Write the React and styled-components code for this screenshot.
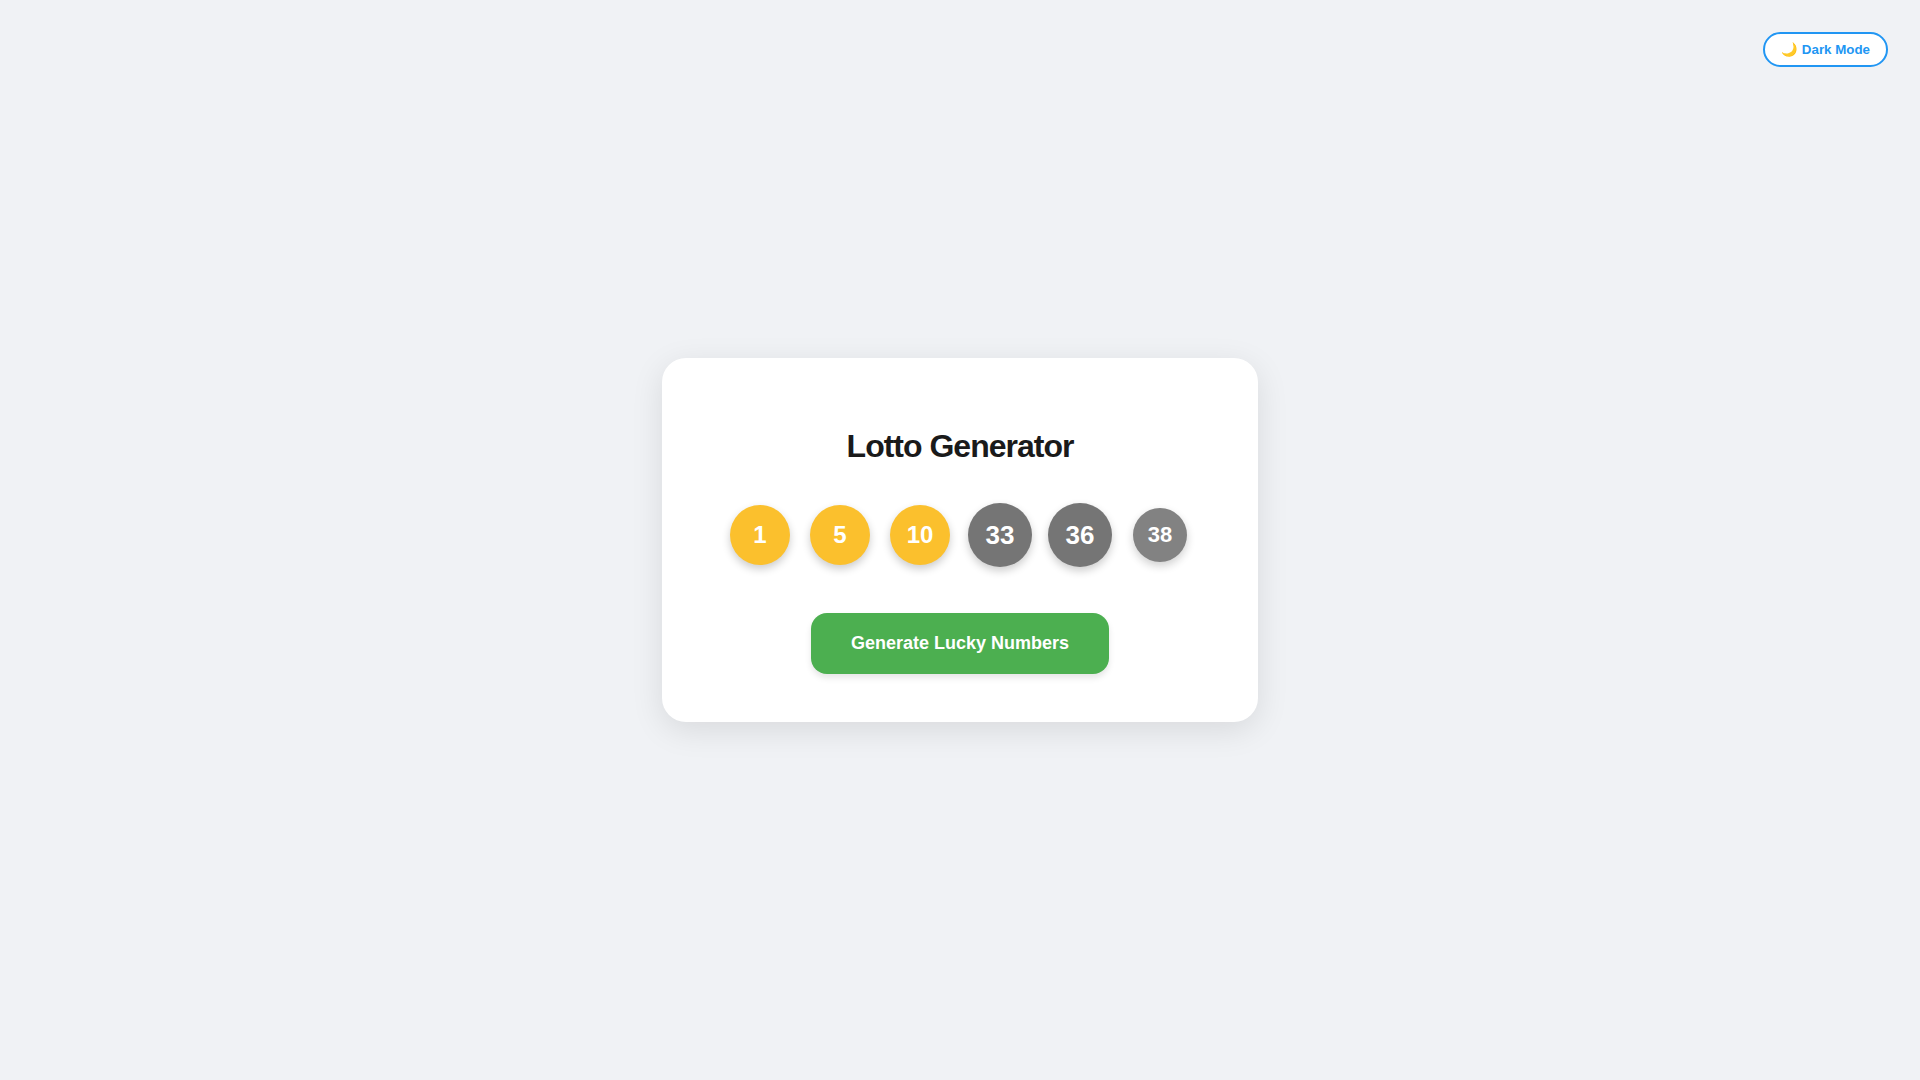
import { useState } from "react";
import styled, { createGlobalStyle } from "styled-components";

const GlobalStyle = createGlobalStyle`
  body {
    margin: 0;
    font-family: "Liberation Sans", Arial, sans-serif;
    color: ${({ $dark }) => ($dark ? "#f5f5f5" : "#1a1a1a")};
    background-color: ${({ $dark }) => ($dark ? "#121212" : "#f0f2f5")};
  }
`;

// One shared cell: the toggle sits in its corner, the card in its middle
const Page = styled.div`
  display: grid;
  grid-template-areas: "stage";
  min-height: 100vh;
`;

// Keeps the browser's own button text size
const ThemeToggle = styled.button`
  grid-area: stage;
  place-self: start end;
  margin: 32px;
  padding: 8px 16px;
  font-family: inherit;
  font-weight: 700;
  line-height: 15px;
  color: #2196f3;
  background-color: ${({ $dark }) => ($dark ? "#1e1e1e" : "#ffffff")};
  border: 2px solid #2196f3;
  border-radius: 20px;
  cursor: pointer;
`;

const Card = styled.main`
  grid-area: stage;
  place-self: center;
  display: flex;
  flex-direction: column;
  align-items: center;
  width: 90%;
  max-width: 500px;
  padding: 48px;
  text-align: center;
  background-color: ${({ $dark }) => ($dark ? "#1e1e1e" : "#ffffff")};
  border-radius: 24px;
  box-shadow: 0 8px 32px rgba(0, 0, 0, 0.1);
`;

const Title = styled.h1`
  margin: 21px 0 40px;
  font-size: 32px;
  line-height: 38px;
  letter-spacing: -1px;
`;

const Balls = styled.div`
  display: flex;
  flex-wrap: wrap;
  justify-content: center;
  gap: 20px;
  margin-bottom: 48px;
`;

const Slot = styled.div`
  display: grid;
  place-content: center;
  width: 60px;
  height: 60px;
`;

const Ball = styled.div`
  display: flex;
  align-items: center;
  justify-content: center;
  width: ${({ $size }) => $size}px;
  height: ${({ $size }) => $size}px;
  font-size: ${({ $size }) => Math.round($size * 0.4)}px;
  font-weight: 700;
  color: #ffffff;
  background-color: ${({ $color }) => $color};
  border-radius: 50%;
  box-shadow: 0 4px 8px rgba(0, 0, 0, 0.2);
  opacity: ${({ $opacity }) => $opacity};
`;

const GenerateButton = styled.button`
  padding: 20px 40px;
  font-family: inherit;
  font-size: 18px;
  font-weight: 700;
  line-height: 21px;
  color: #ffffff;
  background-color: #4caf50;
  border: none;
  border-radius: 16px;
  box-shadow: 0 4px 6px rgba(0, 0, 0, 0.1);
  cursor: pointer;

  &:hover {
    background-color: #43a047;
  }
`;

const START = [
  { number: 1, size: 60, opacity: 1 },
  { number: 5, size: 60, opacity: 1 },
  { number: 10, size: 60, opacity: 1 },
  { number: 33, size: 64, opacity: 1 },
  { number: 36, size: 64, opacity: 1 },
  { number: 38, size: 54, opacity: 0.9 },
];

function ballColor(number) {
  if (number <= 10) return "#fbc02d";
  if (number <= 20) return "#1976d2";
  if (number <= 30) return "#d32f2f";
  if (number <= 40) return "#757575";
  return "#388e3c";
}

function drawNumbers() {
  const picked = new Set();
  while (picked.size < 6) {
    picked.add(Math.floor(Math.random() * 45) + 1);
  }
  return [...picked]
    .sort((a, b) => a - b)
    .map((number) => ({ number, size: 60, opacity: 1 }));
}

export default function App() {
  const [dark, setDark] = useState(false);
  const [balls, setBalls] = useState(START);

  return (
    <>
      <GlobalStyle $dark={dark} />
      <Page>
        <Card $dark={dark}>
          <Title>Lotto Generator</Title>
          <Balls>
            {balls.map(({ number, size, opacity }) => (
              <Slot key={number}>
                <Ball $size={size} $opacity={opacity} $color={ballColor(number)}>
                  {number}
                </Ball>
              </Slot>
            ))}
          </Balls>
          <GenerateButton type="button" onClick={() => setBalls(drawNumbers())}>
            Generate Lucky Numbers
          </GenerateButton>
        </Card>
        <ThemeToggle type="button" $dark={dark} onClick={() => setDark(!dark)}>
          {dark ? "☀️ Light Mode" : "🌙 Dark Mode"}
        </ThemeToggle>
      </Page>
    </>
  );
}
